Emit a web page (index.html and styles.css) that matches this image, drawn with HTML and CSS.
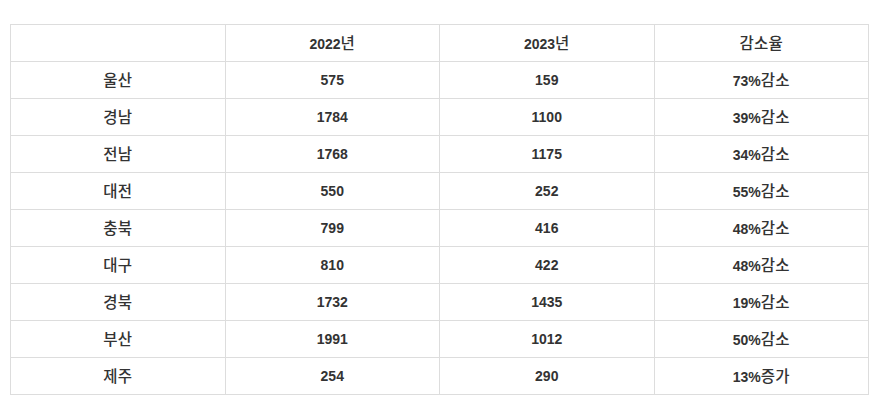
FILE: index.html
```html
<!DOCTYPE html>
<html lang="ko">
<head>
<meta charset="utf-8">
<link rel="stylesheet" href="styles.css">
</head>
<body>
<table class="stats">
<thead>
<tr><th></th><th>2022<span class="k">년</span></th><th>2023<span class="k">년</span></th><th><span class="k">감소율</span></th></tr>
</thead>
<tbody>
<tr><td><span class="k">울산</span></td><td>575</td><td>159</td><td>73%<span class="k">감소</span></td></tr>
<tr><td><span class="k">경남</span></td><td>1784</td><td>1100</td><td>39%<span class="k">감소</span></td></tr>
<tr><td><span class="k">전남</span></td><td>1768</td><td>1175</td><td>34%<span class="k">감소</span></td></tr>
<tr><td><span class="k">대전</span></td><td>550</td><td>252</td><td>55%<span class="k">감소</span></td></tr>
<tr><td><span class="k">충북</span></td><td>799</td><td>416</td><td>48%<span class="k">감소</span></td></tr>
<tr><td><span class="k">대구</span></td><td>810</td><td>422</td><td>48%<span class="k">감소</span></td></tr>
<tr><td><span class="k">경북</span></td><td>1732</td><td>1435</td><td>19%<span class="k">감소</span></td></tr>
<tr><td><span class="k">부산</span></td><td>1991</td><td>1012</td><td>50%<span class="k">감소</span></td></tr>
<tr><td><span class="k">제주</span></td><td>254</td><td>290</td><td>13%<span class="k">증가</span></td></tr>
</tbody>
</table>
</body>
</html>
```
FILE: styles.css
```css
html, body {
  margin: 0;
  background: #fff;
}
body {
  padding: 24px 12px 0 10px;
  font-family: "Liberation Sans", "Noto Sans CJK KR", sans-serif;
  font-size: 14px;
  color: #333;
}
.stats {
  width: 859px;
  border-collapse: collapse;
  table-layout: fixed;
}
.stats th, .stats td {
  border: 1px solid #ddd;
  height: 36px;
  padding: 0;
  box-sizing: border-box;
  text-align: center;
  vertical-align: middle;
  font-weight: bold;
  line-height: 16px;
}
.stats tr {
  height: 37px;
}
.k {
  font-family: "Noto Sans CJK KR", sans-serif;
  font-size: 15.5px;
  font-weight: 500;
  letter-spacing: 0.3px;
}
```
